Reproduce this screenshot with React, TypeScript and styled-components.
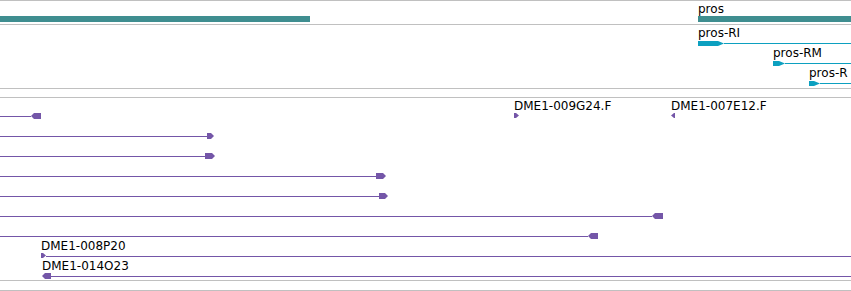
import React from 'react';
import styled, { createGlobalStyle } from 'styled-components';

const GlobalStyle = createGlobalStyle`
    html, body {
        margin: 0;
        padding: 0;
        background: #ffffff;
        overflow: hidden;
    }
    body {
        font-family: "DejaVu Sans", "Liberation Sans", sans-serif;
    }
`;

const VIEW_WIDTH = 851;
const PURPLE = '#7456a8';
const CYAN = '#0ca0c0';
const TEAL = '#3f8e90';

const Browser = styled.div`
    width: ${VIEW_WIDTH}px;
    height: 291px;
    display: flex;
    flex-direction: column;
    overflow: hidden;
`;

const Track = styled.div<{ $height: number }>`
    box-sizing: border-box;
    height: ${(p) => p.$height}px;
    flex: 0 0 auto;
    border-top: 1px solid #c0c0c0;
    display: flex;
    flex-direction: column;
    overflow: hidden;
`;

// one row of features; features sit on it at their genome position
const Lane = styled.div<{ $height: number }>`
    position: relative;
    flex: 0 0 ${(p) => p.$height}px;
`;

const Feature = styled.div<{ $height: number; $pad?: number }>`
    position: absolute;
    top: 0;
    height: ${(p) => p.$height}px;
    padding-bottom: ${(p) => p.$pad ?? 0}px;
    box-sizing: border-box;
    display: flex;
    flex-direction: column;
    justify-content: flex-end;
`;

const Label = styled.div`
    font-size: 12px;
    line-height: 14px;
    height: 14px;
    color: #000;
    white-space: nowrap;
`;

const GeneBar = styled.div`
    height: 6px;
    background: ${TEAL};
`;

const Glyph = styled.div`
    height: 6px;
    display: flex;
    align-items: flex-start;
`;

const Line = styled.div<{ $color: string }>`
    flex: 1 1 auto;
    height: 1px;
    margin-top: 3px;
    background: ${(p) => p.$color};
`;

const Head = styled.svg<{ $offset: number }>`
    flex: 0 0 auto;
    display: block;
    margin-top: ${(p) => p.$offset}px;
`;

type Dir = 'left' | 'right';

// arrow head polygon, w x h, pointing dir
const headPoints = (w: number, h: number, dir: Dir, tip: number) => {
    if (dir === 'right') {
        return `0,0 ${w - tip},0 ${w},${h / 2} ${w - tip},${h} 0,${h}`;
    }
    return `${tip},0 ${w},0 ${w},${h} ${tip},${h} 0,${h / 2}`;
};

function Arrow(props: { w: number; h: number; dir: Dir; color: string; tip?: number; offset?: number }) {
    const { w, h, dir, color, tip = 3, offset = 0 } = props;
    return (
        <Head width={w} height={h} $offset={offset}>
            <polygon points={headPoints(w, h, dir, tip)} fill={color} />
        </Head>
    );
}

type Clone = {
    start: number;
    end: number;
    headW: number;
    headH: number;
    dir: Dir;
    headAt: 'start' | 'end';
    label?: string;
};

// lanes of the clone track, each a list of features
const cloneLanes: Clone[][] = [
    [
        { start: 0, end: 41, headW: 10, headH: 6, dir: 'left', headAt: 'end' },
        { start: 514, end: 519, headW: 5, headH: 5, dir: 'right', headAt: 'end', label: 'DME1-009G24.F' },
        { start: 671, end: 675, headW: 4, headH: 5, dir: 'left', headAt: 'end', label: 'DME1-007E12.F' },
    ],
    [{ start: 0, end: 214, headW: 7, headH: 6, dir: 'right', headAt: 'end' }],
    [{ start: 0, end: 215, headW: 10, headH: 6, dir: 'right', headAt: 'end' }],
    [{ start: 0, end: 386, headW: 10, headH: 6, dir: 'right', headAt: 'end' }],
    [{ start: 0, end: 388, headW: 9, headH: 6, dir: 'right', headAt: 'end' }],
    [{ start: 0, end: 663, headW: 11, headH: 6, dir: 'left', headAt: 'end' }],
    [{ start: 0, end: 598, headW: 10, headH: 6, dir: 'left', headAt: 'end' }],
    [{ start: 41, end: VIEW_WIDTH, headW: 5, headH: 5, dir: 'right', headAt: 'start', label: 'DME1-008P20' }],
    [{ start: 42, end: VIEW_WIDTH, headW: 9, headH: 6, dir: 'left', headAt: 'start', label: 'DME1-014O23' }],
];

type Transcript = { start: number; thick: number; label: string };

const transcripts: Transcript[] = [
    { start: 698, thick: 26, label: 'pros-RI' },
    { start: 773, thick: 12, label: 'pros-RM' },
    { start: 809, thick: 11, label: 'pros-R' },
];

const genes = [
    { start: 0, end: 310, label: '' },
    { start: 698, end: VIEW_WIDTH, label: 'pros' },
];

function CloneFeature({ c }: { c: Clone }) {
    const head = <Arrow w={c.headW} h={c.headH} dir={c.dir} color={PURPLE} />;
    const hasLine = c.end - c.start > c.headW;
    return (
        <Feature $height={21} style={{ left: c.start, width: c.end - c.start }}>
            {c.label && <Label>{c.label}</Label>}
            <Glyph>
                {c.headAt === 'start' && head}
                {hasLine && <Line $color={PURPLE} />}
                {c.headAt === 'end' && head}
            </Glyph>
        </Feature>
    );
}

function App() {
    return (
        <>
            <GlobalStyle />
            <Browser>
                <Track $height={24}>
                    <Lane $height={23}>
                        {genes.map((g) => (
                            <Feature key={g.start} $height={23} $pad={2} style={{ left: g.start, width: g.end - g.start }}>
                                {g.label && <Label>{g.label}</Label>}
                                <GeneBar />
                            </Feature>
                        ))}
                    </Lane>
                </Track>
                <Track $height={64}>
                    {transcripts.map((t) => (
                        <Lane key={t.label} $height={20}>
                            <Feature $height={21} style={{ left: t.start, width: VIEW_WIDTH - t.start }}>
                                <Label>{t.label}</Label>
                                <Glyph>
                                    <Arrow w={t.thick} h={5} dir="right" color={CYAN} tip={6} offset={1} />
                                    <Line $color={CYAN} />
                                </Glyph>
                            </Feature>
                        </Lane>
                    ))}
                </Track>
                <Track $height={9} />
                <Track $height={183}>
                    {cloneLanes.map((lane, i) => (
                        <Lane key={i} $height={20}>
                            {lane.map((c) => (
                                <CloneFeature key={c.start} c={c} />
                            ))}
                        </Lane>
                    ))}
                </Track>
                <Track $height={10} />
                <Track $height={1} />
            </Browser>
        </>
    );
}

export default App;
